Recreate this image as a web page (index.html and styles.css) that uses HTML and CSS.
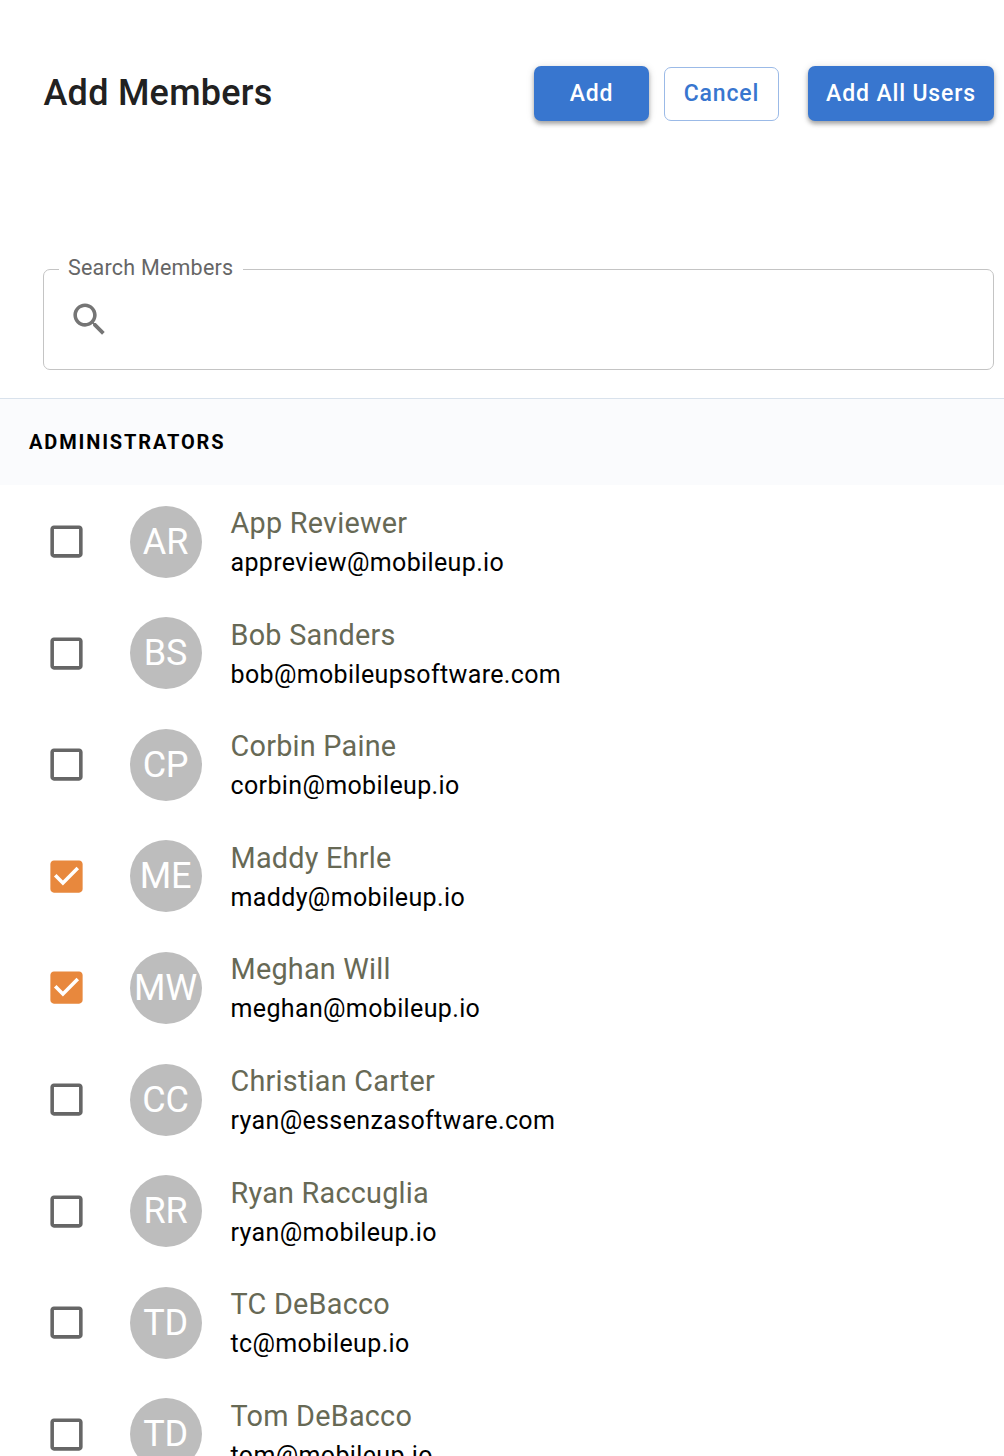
FILE: index.html
```html
<!DOCTYPE html>
<html lang="en">
<head>
    <meta charset="UTF-8">
    <meta name="viewport" content="width=device-width, initial-scale=1.0">
    <title>Add Members</title>
    <link rel="stylesheet" href="styles.css">
</head>
<body>
    <header class="header">
        <h1>Add Members</h1>
        <button class="btn primary">Add</button>
        <button class="btn outlined">Cancel</button>
        <button class="btn primary all">Add All Users</button>
    </header>

    <fieldset class="search">
        <legend>Search Members</legend>
        <svg viewBox="0 0 24 24"><path d="M15.5 14h-.79l-.28-.27C15.41 12.59 16 11.11 16 9.5 16 5.91 13.09 3 9.5 3S3 5.91 3 9.5 5.91 16 9.5 16c1.61 0 3.09-.59 4.23-1.57l.27.28v.79l5 4.99L20.49 19l-4.99-5zm-6 0C7.01 14 5 11.99 5 9.5S7.01 5 9.5 5 14 7.01 14 9.5 11.99 14 9.5 14z"/></svg>
        <input type="text" aria-label="Search Members">
    </fieldset>

    <h2 class="group-title">Administrators</h2>
    <ul class="members" id="members"></ul>

    <script>
        const members = [
            { initials: 'AR', name: 'App Reviewer', email: 'appreview@mobileup.io' },
            { initials: 'BS', name: 'Bob Sanders', email: 'bob@mobileupsoftware.com' },
            { initials: 'CP', name: 'Corbin Paine', email: 'corbin@mobileup.io' },
            { initials: 'ME', name: 'Maddy Ehrle', email: 'maddy@mobileup.io', checked: true },
            { initials: 'MW', name: 'Meghan Will', email: 'meghan@mobileup.io', checked: true },
            { initials: 'CC', name: 'Christian Carter', email: 'ryan@essenzasoftware.com' },
            { initials: 'RR', name: 'Ryan Raccuglia', email: 'ryan@mobileup.io' },
            { initials: 'TD', name: 'TC DeBacco', email: 'tc@mobileup.io' },
            { initials: 'TD', name: 'Tom DeBacco', email: 'tom@mobileup.io' }
        ];

        const emptyBox = 'M19 5v14H5V5h14m0-2H5c-1.1 0-2 .9-2 2v14c0 1.1.9 2 2 2h14c1.1 0 2-.9 2-2V5c0-1.1-.9-2-2-2z';
        const checkedBox = 'M19 3H5c-1.11 0-2 .9-2 2v14c0 1.1.89 2 2 2h14c1.11 0 2-.9 2-2V5c0-1.1-.89-2-2-2zm-9 14l-5-5 1.41-1.41L10 14.17l7.59-7.59L19 8l-9 9z';

        document.getElementById('members').innerHTML = members.map(member => `
            <li class="member">
                <svg class="checkbox ${member.checked ? 'checked' : ''}" viewBox="0 0 24 24"><path d="${member.checked ? checkedBox : emptyBox}"/></svg>
                <div class="avatar">${member.initials}</div>
                <div class="info">
                    <p class="name">${member.name}</p>
                    <p class="email">${member.email}</p>
                </div>
            </li>
        `).join('');
    </script>
</body>
</html>
```

FILE: styles.css
```css
* {
    margin: 0;
    padding: 0;
    box-sizing: border-box;
}

body {
    height: 1456px;
    overflow: hidden;
    background: #fff;
    font-family: Roboto, sans-serif;
}

.header {
    display: flex;
    align-items: center;
    height: 187px;
    padding: 0 10px 0 43.5px;
}

h1 {
    flex: 1;
    padding-bottom: 2px;
    font-size: 36px;
    font-weight: 500;
    letter-spacing: 0.25px;
    color: #212121;
}

.btn {
    width: 115px;
    height: 54px;
    margin-right: 15px;
    border: none;
    border-radius: 7px;
    font-family: inherit;
    font-size: 23px;
    font-weight: 500;
    letter-spacing: 0.85px;
    cursor: pointer;
}

.primary {
    height: 55px;
    background: #3876cf;
    color: #fff;
    box-shadow: 0 3px 4px rgba(0, 0, 0, 0.3), 0 1px 8px rgba(0, 0, 0, 0.12);
}

.outlined {
    margin-right: 29px;
    padding-bottom: 1px;
    border: 1px solid #9bbae7;
    background: #fff;
    color: #3876cf;
}

.all {
    width: 186px;
    margin-right: 0;
}

.search {
    display: flex;
    align-items: center;
    height: 115px;
    margin: 68px 10px 28px 43px;
    padding: 0 14px 15px 24px;
    border: 1px solid #c4c4c4;
    border-radius: 7px;
}

.search legend {
    margin-left: -9px;
    padding: 0 10px 4px 9px;
    font-size: 21.5px;
    line-height: 25px;
    letter-spacing: 0.22px;
    color: #666;
}

.search svg {
    width: 43px;
    height: 43px;
    fill: #757575;
}

.search input {
    flex: 1;
    height: 60px;
    border: none;
    outline: none;
    font-size: 28px;
}

.group-title {
    height: 87px;
    padding-left: 29px;
    border-top: 1px solid #d9e2ec;
    background: #fafbfd;
    color: #000;
    font-size: 20px;
    font-weight: 700;
    line-height: 86px;
    letter-spacing: 1.85px;
    text-transform: uppercase;
}

.members {
    padding-top: 0.8px;
    list-style: none;
}

.member {
    display: flex;
    align-items: center;
    height: 111.6px;
    padding-left: 45px;
}

.checkbox {
    width: 43px;
    height: 43px;
    fill: #666;
}

.checkbox.checked {
    fill: #e8883d;
}

.avatar {
    display: flex;
    justify-content: center;
    align-items: center;
    width: 72px;
    height: 72px;
    margin: 0 28.5px 0 42px;
    padding-right: 1px;
    border-radius: 50%;
    background: #bdbdbd;
    color: #fff;
    font-size: 36px;
    letter-spacing: -0.2px;
}

.info {
    padding-top: 2px;
}

.name {
    color: #676955;
    font-size: 28.8px;
    line-height: 40px;
    letter-spacing: 0.24px;
}

.email {
    color: #000;
    font-size: 25px;
    line-height: 39.2px;
    letter-spacing: 0.36px;
}
```
